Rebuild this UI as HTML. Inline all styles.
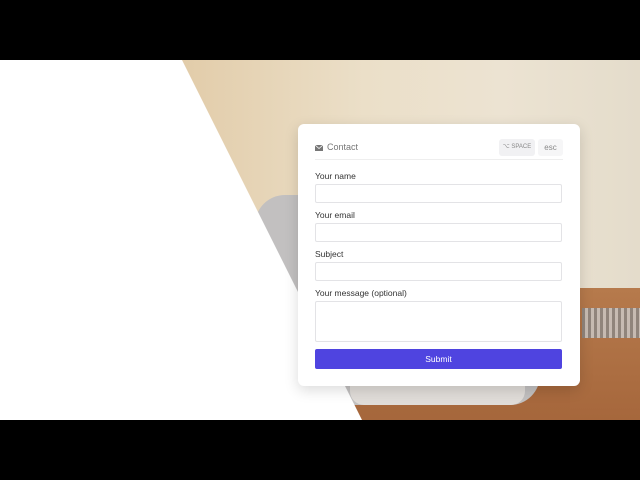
<!DOCTYPE html>
<html><head><style>
*{box-sizing:border-box;margin:0;padding:0}
body{width:640px;height:480px;background:#000;position:relative;overflow:hidden;font-family:"Liberation Sans",sans-serif}
.scene{position:absolute;left:0;top:60px;width:640px;height:360px;overflow:hidden;background:linear-gradient(180deg,#e6d9c0 0,#e6d9c0 235px,#ad6e42 236px,#a6673c 100%)}
.wall{position:absolute;left:180px;top:0;width:460px;height:236px;background:linear-gradient(90deg,#e2cca9 0%,#ebdfc8 40%,#ece3d2 70%,#e4dccb 100%)}
.desk{position:absolute;left:570px;top:228px;width:70px;height:132px;background:linear-gradient(180deg,#b67a4c,#a6673c)}
.phone{position:absolute;left:255px;top:135px;width:285px;height:210px;background:#c2c0c0;border-radius:30px}
.phonebase{position:absolute;left:350px;top:320px;width:175px;height:25px;background:#e0dcd8;border-radius:0 0 14px 14px}
.coil{position:absolute;left:582px;top:248px;width:58px;height:30px;background:repeating-linear-gradient(90deg,#888 0 3px,#ccc 3px 6px);opacity:.8}
.white{position:absolute;left:0;top:0;width:640px;height:360px;background:#fff;clip-path:polygon(0 0,182px 0,362px 360px,0 360px)}
.card{position:absolute;left:298px;top:124px;width:282px;height:262px;background:#fff;border-radius:6px;box-shadow:0 4px 14px rgba(0,0,0,.15)}
.hdr{position:absolute;left:17px;top:18px;font-size:9px;color:#777}
.hdr svg{vertical-align:-1px;margin-right:4px}
.kbd{position:absolute;top:15px;height:17px;background:#f1f1f3;border-radius:3px;font-size:6px;color:#888;text-align:center;line-height:17px}
.line{position:absolute;left:17px;right:17px;top:35px;border-top:1px solid #eee}
.lbl{position:absolute;left:17px;font-size:8.5px;color:#333}
.inp{position:absolute;left:17px;width:247px;height:19px;border:1px solid #e3e3e6;border-radius:2px}
.btn{position:absolute;left:17px;top:225px;width:247px;height:20px;background:#4f44e0;border-radius:2px;color:#fff;font-size:8.5px;text-align:center;line-height:20px}
</style></head><body>
<div class="scene">
<div class="wall"></div><div class="desk"></div><div class="phone"></div><div class="phonebase"></div><div class="coil"></div>
<div class="white"></div>
</div>
<div class="card">
<div class="hdr"><svg width="8" height="6" viewBox="0 0 8 6"><rect width="8" height="6" fill="#777"/><path d="M0 0L4 3.5L8 0" stroke="#fff" stroke-width=".8" fill="none"/></svg>Contact</div>
<div class="kbd" style="left:201px;width:36px">⌥ SPACE</div>
<div class="kbd" style="left:240px;width:25px;font-size:8px;background:#f6f6f7">esc</div>
<div class="line"></div>
<div class="lbl" style="top:47px">Your name</div><div class="inp" style="top:60px"></div>
<div class="lbl" style="top:86px">Your email</div><div class="inp" style="top:99px"></div>
<div class="lbl" style="top:125px">Subject</div><div class="inp" style="top:138px"></div>
<div class="lbl" style="top:164px">Your message (optional)</div><div class="inp" style="top:177px;height:41px"></div>
<div class="btn">Submit</div>
</div>
</body></html>
